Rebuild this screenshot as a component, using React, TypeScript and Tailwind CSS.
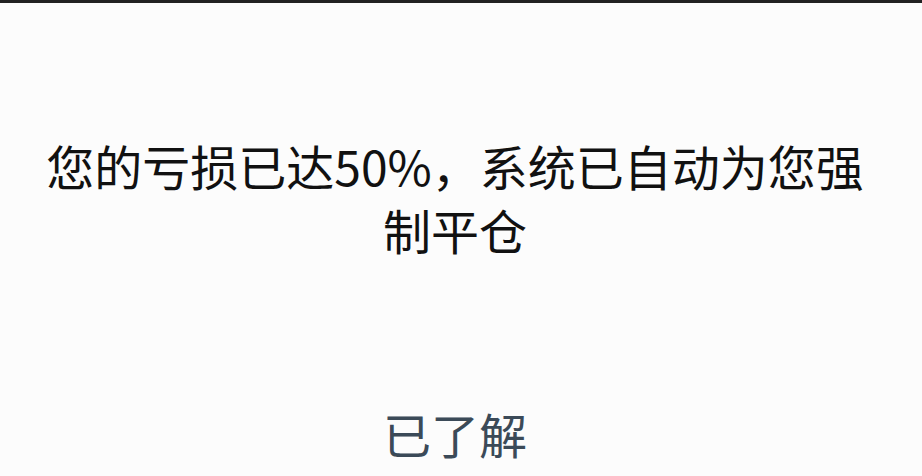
export default function App() {
  return (
    <div
      className="w-[922px] h-[476px] bg-[#fcfcfc] flex flex-col overflow-hidden"
      style={{ fontFamily: '"Noto Sans CJK SC", "Noto Sans", sans-serif' }}
    >
      {/* top edge */}
      <div className="h-[3px] bg-[#222] shrink-0" />

      <div className="flex-1 flex flex-col items-center pr-[12px]">
        <p className="mt-[130px] text-center text-[48px] leading-[64px] text-[#111] w-[840px]">
          您的亏损已达50%，系统已自动为您强制平仓
        </p>
        <button className="mt-[144px] text-[48px] leading-[56px] text-[#3b4a58] bg-transparent">
          已了解
        </button>
      </div>
    </div>
  );
}
